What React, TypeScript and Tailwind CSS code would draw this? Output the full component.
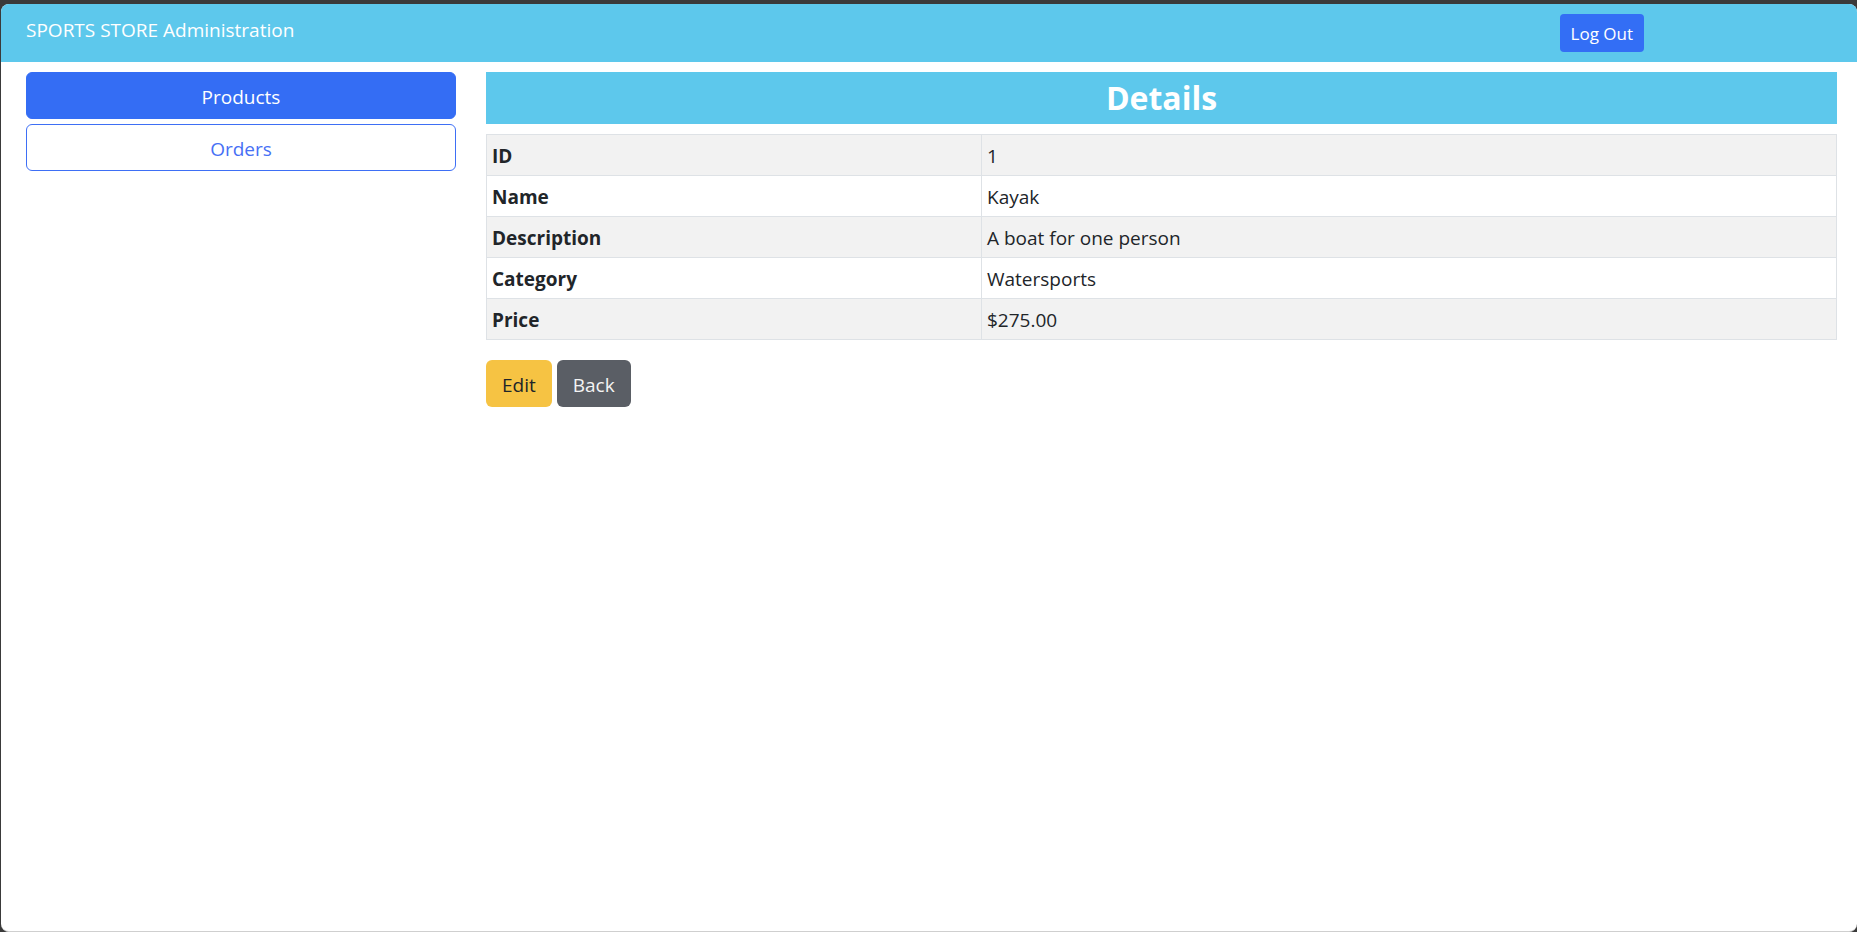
import React from 'react';

const font = { fontFamily: '"Open Sans", "Noto Sans", sans-serif' };

const rows = [
  { label: 'ID', value: '1' },
  { label: 'Name', value: 'Kayak' },
  { label: 'Description', value: 'A boat for one person' },
  { label: 'Category', value: 'Watersports' },
  { label: 'Price', value: '$275.00' },
];

function Header() {
  return (
    <header className="flex items-start h-[58px] pt-[10px] pl-[25px] bg-[#5dc8ec] text-white">
      <div className="flex-1 pt-[1px] text-[19px] leading-[30px]">SPORTS STORE Administration</div>
      <button className="mr-[213px] h-[38px] px-[11px] pt-[1px] rounded-[4px] bg-[#336ef5] text-[17px] leading-[26px] text-white">
        Log Out
      </button>
    </header>
  );
}

function Sidebar() {
  return (
    <aside className="w-[430px] flex flex-col gap-[5px]">
      <button className="h-[47px] pt-[2px] rounded-[6px] bg-[#346df4] border border-[#346df4] text-white text-[19px] leading-[30px]">
        Products
      </button>
      <button className="h-[47px] pt-[2px] rounded-[6px] bg-white border border-[#3e6ff5] text-[#4770f5] text-[19px] leading-[30px]">
        Orders
      </button>
    </aside>
  );
}

function DetailsPanel() {
  return (
    <main className="flex-1 flex flex-col">
      <h3 className="h-[52px] bg-[#5dc8ec] text-white text-center font-bold text-[32px] leading-[52px]">Details</h3>
      <table className="mt-[10px] w-full border-collapse text-[#212529] text-[19px] leading-[30px]">
        <tbody>
          {rows.map((r, i) => (
            <tr key={r.label} className={i % 2 === 0 ? 'bg-[#f2f2f2]' : 'bg-white'}>
              <th className="w-[495px] border border-[#dee2e6] px-[5px] pt-[6px] pb-[4px] text-left font-bold">{r.label}</th>
              <td className="border border-[#dee2e6] px-[5px] pt-[6px] pb-[4px]">{r.value}</td>
            </tr>
          ))}
        </tbody>
      </table>
      <div className="mt-[20px] flex gap-[5px]">
        <button className="h-[47px] px-[16px] pt-[2px] rounded-[6px] bg-[#f6c343] text-[#212529] text-[19px] leading-[30px]">Edit</button>
        <button className="h-[47px] px-[16px] pt-[2px] rounded-[6px] bg-[#5a5e65] text-[#f4f4f4] text-[19px] leading-[30px]">Back</button>
      </div>
    </main>
  );
}

export default function App() {
  return (
    <div className="w-[1857px] h-[932px] bg-[#3a3a3a] pt-[4px] pl-[1px] overflow-hidden" style={font}>
      <div className="h-[928px] bg-white rounded-[8px] overflow-hidden border-b border-[#cfcfcf]">
        <Header />
        <div className="flex gap-[30px] pt-[10px] pl-[25px] pr-[20px]">
          <Sidebar />
          <DetailsPanel />
        </div>
      </div>
    </div>
  );
}
